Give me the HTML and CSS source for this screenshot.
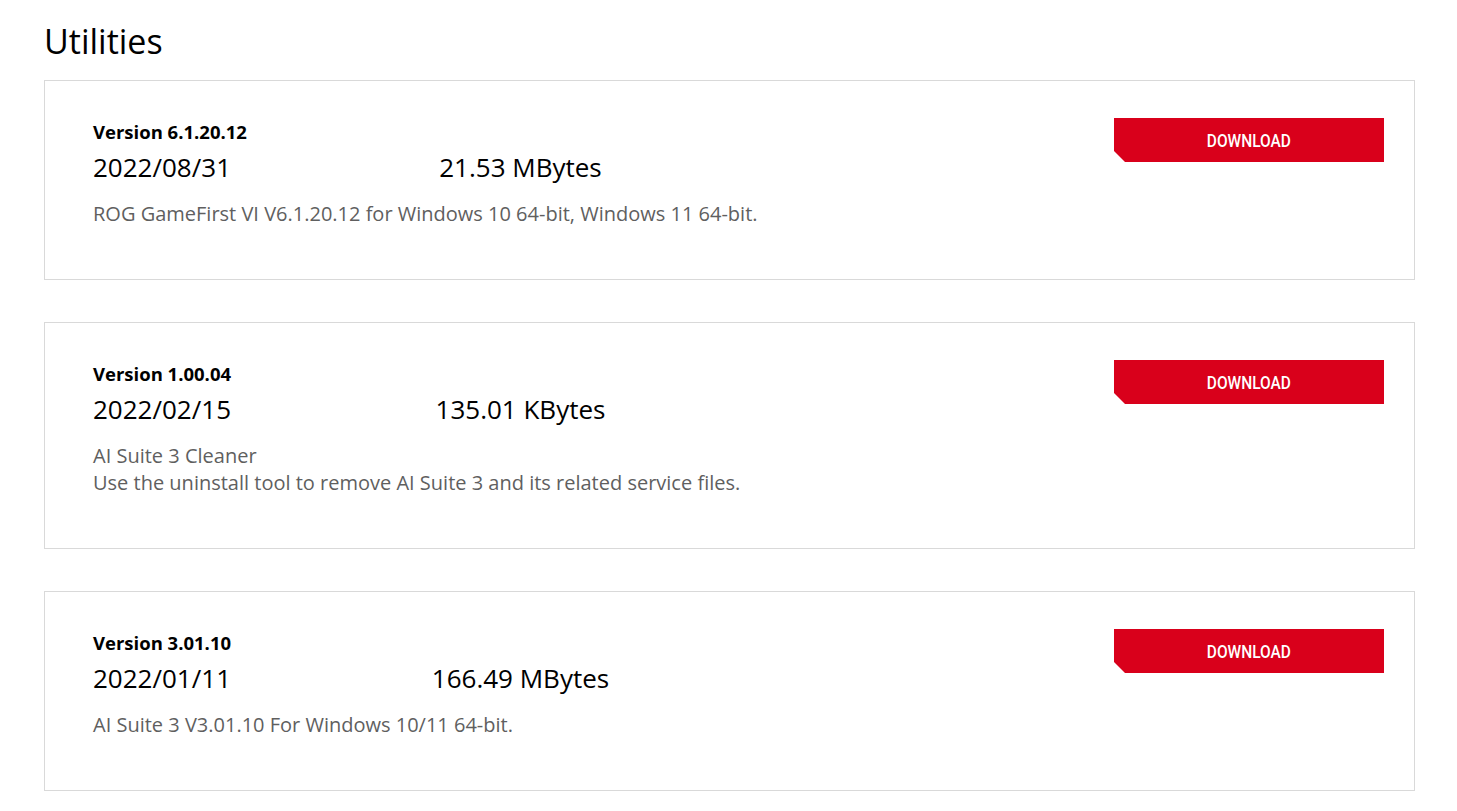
FILE: index.html
```html
<!DOCTYPE html>
<html lang="en">
<head>
<meta charset="utf-8">
<title>Utilities</title>
<link rel="stylesheet" href="styles.css">
</head>
<body>
<main class="page">
  <h1 class="title">Utilities</h1>
  <div class="list">
    <section class="card">
      <div class="info">
        <div class="version">Version 6.1.20.12</div>
        <div class="meta">
          <span class="date">2022/08/31</span>
          <span class="size">21.53 MBytes</span>
        </div>
        <div class="desc">ROG GameFirst VI V6.1.20.12 for Windows 10 64-bit, Windows 11 64-bit.</div>
      </div>
      <a class="download" href="#"><span class="download-label">DOWNLOAD</span></a>
    </section>
    <section class="card">
      <div class="info">
        <div class="version">Version 1.00.04</div>
        <div class="meta">
          <span class="date">2022/02/15</span>
          <span class="size">135.01 KBytes</span>
        </div>
        <div class="desc">AI Suite 3 Cleaner<br>Use the uninstall tool to remove AI Suite 3 and its related service files.</div>
      </div>
      <a class="download" href="#"><span class="download-label">DOWNLOAD</span></a>
    </section>
    <section class="card">
      <div class="info">
        <div class="version">Version 3.01.10</div>
        <div class="meta">
          <span class="date">2022/01/11</span>
          <span class="size">166.49 MBytes</span>
        </div>
        <div class="desc">AI Suite 3 V3.01.10 For Windows 10/11 64-bit.</div>
      </div>
      <a class="download" href="#"><span class="download-label">DOWNLOAD</span></a>
    </section>
  </div>
</main>
</body>
</html>
```
FILE: styles.css
```css
html, body {
  margin: 0;
  padding: 0;
  background: #ffffff;
}
body {
  font-family: "Open Sans", "Noto Sans", sans-serif;
  color: #000;
}
.page {
  padding: 17px 42px 0 44px;
}
.title {
  margin: 0 0 15px 0;
  font-size: 34px;
  font-weight: 400;
  line-height: 48px;
}
.list {
  display: flex;
  flex-direction: column;
  gap: 42px;
}
.card {
  border: 1px solid #d9d9d9;
  display: flex;
  justify-content: space-between;
  align-items: flex-start;
  padding: 39px 30px 52px 48px;
}
.version {
  font-size: 18.5px;
  font-weight: 700;
  line-height: 24px;
}
.meta {
  display: grid;
  grid-template-columns: 285px 285px;
  margin-top: 5px;
  font-size: 26px;
  line-height: 36px;
}
.size {
  text-align: center;
}
.desc {
  margin-top: 15px;
  font-size: 20px;
  line-height: 27px;
  color: #5f5f5f;
}
.download {
  margin-top: -2px;
  flex: none;
  width: 270px;
  height: 44px;
  display: flex;
  align-items: center;
  justify-content: center;
  background: #d9001b;
  color: #fff;
  text-decoration: none;
  font-family: Roboto, sans-serif;
  font-size: 18px;
  font-weight: 500;
  clip-path: polygon(0 0, 100% 0, 100% 100%, 11px 100%, 0 calc(100% - 11px));
}
.download-label {
  display: inline-block;
  transform: scaleX(0.86);
}
```
